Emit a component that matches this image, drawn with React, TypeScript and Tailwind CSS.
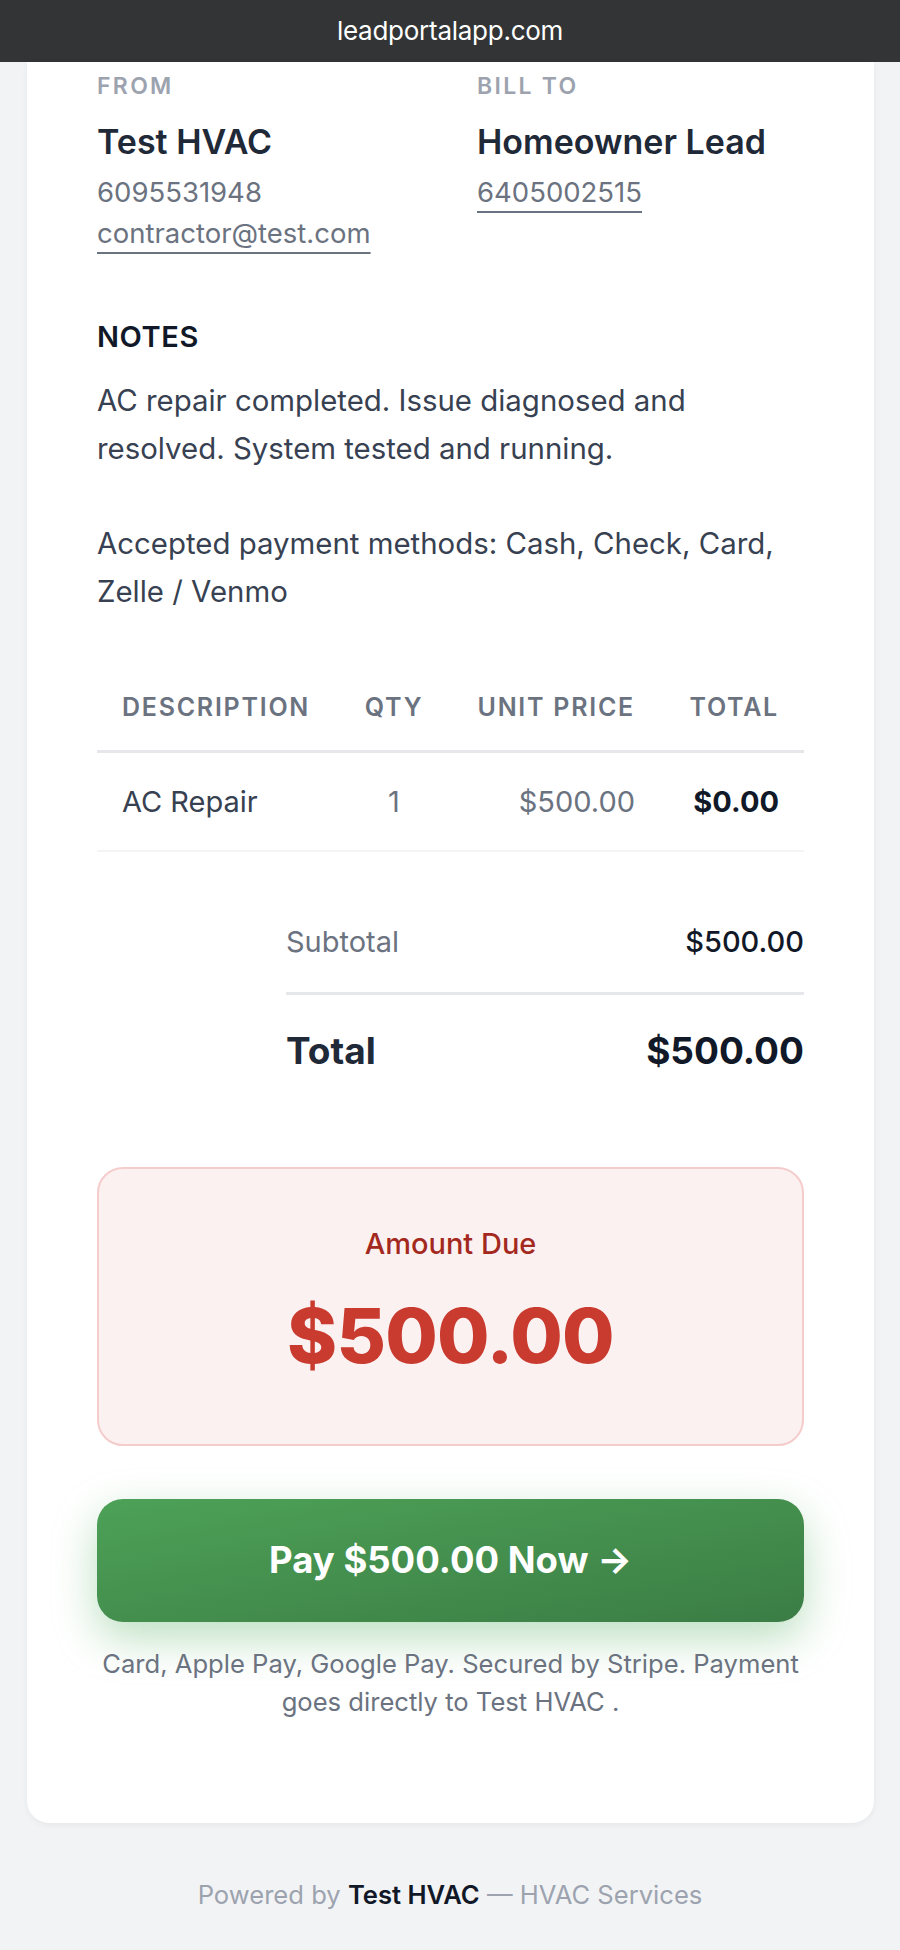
import React from "react";

interface LineItem {
  description: string;
  qty: number;
  unitPrice: string;
  total: string;
}

const items: LineItem[] = [
  { description: "AC Repair", qty: 1, unitPrice: "$500.00", total: "$0.00" },
];

const notes =
  "AC repair completed. Issue diagnosed and resolved. System tested and running.\n\nAccepted payment methods: Cash, Check, Card, Zelle / Venmo";

const App: React.FC = () => {
  return (
    <div className="min-h-[1950px] bg-[#f2f3f5] font-['Inter',sans-serif] antialiased">
      {/* browser address bar */}
      <div className="h-[62px] bg-[#333436] flex items-center justify-center">
        <span className="text-white text-[26px] leading-none tracking-[-0.01em]">leadportalapp.com</span>
      </div>

      <div className="ml-[27px] mr-[26px] bg-white rounded-b-[22px] shadow-[0_2px_6px_rgba(0,0,0,0.05)] px-[70px] pt-[12px] pb-[101px]">
        {/* from / bill to */}
        <div className="grid grid-cols-[380px_1fr]">
          <div>
            <div className="text-[23px] leading-[24px] font-semibold tracking-[0.1em] text-[#9ca3af]">FROM</div>
            <div className="mt-[24px] text-[34px] leading-[40px] font-semibold text-[#1f2937]">Test HVAC</div>
            <div className="mt-[10px] text-[27.5px] leading-[41px] text-[#6b7280]">6095531948</div>
            <div className="text-[27.5px] leading-[41px] text-[#6b7280]">
              <span className="underline decoration-[#6b7280] decoration-2 underline-offset-[9px]">contractor@test.com</span>
            </div>
          </div>
          <div>
            <div className="text-[23px] leading-[24px] font-semibold tracking-[0.1em] text-[#9ca3af]">BILL TO</div>
            <div className="mt-[24px] text-[34px] leading-[40px] font-semibold text-[#1f2937]">Homeowner Lead</div>
            <div className="mt-[10px] text-[27.5px] leading-[41px] text-[#6b7280]">
              <span className="underline decoration-[#6b7280] decoration-2 underline-offset-[9px]">6405002515</span>
            </div>
          </div>
        </div>

        {/* notes */}
        <div className="mt-[65px] text-[29px] leading-[36px] font-semibold tracking-[0.02em] text-[#111827]">NOTES</div>
        <p className="mt-[22px] text-[29.4px] leading-[47.8px] text-[#374151] whitespace-pre-line">{notes}</p>

        {/* line items */}
        <div className="mt-[48px]">
          <div className="grid grid-cols-[243px_108px_212px_1fr] border-b-[3px] border-[#e5e7eb] text-[25px] leading-[30px] font-semibold tracking-[0.07em] text-[#6b7280]">
            <div className="px-[25px] pt-[28px] pb-[28px] whitespace-nowrap">DESCRIPTION</div>
            <div className="pt-[28px] pb-[28px] text-center">QTY</div>
            <div className="px-[25px] pt-[28px] pb-[28px] text-right whitespace-nowrap">UNIT PRICE</div>
            <div className="px-[25px] pt-[28px] pb-[28px] text-right">TOTAL</div>
          </div>
          {items.map((item, i) => (
            <div
              key={i}
              className="grid grid-cols-[243px_108px_212px_1fr] border-b-2 border-[#f3f4f6] text-[29px] leading-[41px]"
            >
              <div className="px-[25px] py-[28px] text-[#374151]">{item.description}</div>
              <div className="py-[28px] text-center text-[#6b7280]">{item.qty}</div>
              <div className="px-[25px] py-[28px] text-right text-[#6b7280]">{item.unitPrice}</div>
              <div className="px-[25px] py-[28px] text-right font-bold text-[#111827]">{item.total}</div>
            </div>
          ))}
        </div>

        {/* totals */}
        <div className="ml-auto w-[518px] mt-[70px]">
          <div className="flex justify-between text-[29px] leading-[40px] pb-[30px] border-b-[3px] border-[#e5e7eb]">
            <span className="text-[#6b7280]">Subtotal</span>
            <span className="text-[#111827] font-medium">$500.00</span>
          </div>
          <div className="flex justify-between text-[37px] leading-[46px] font-bold pt-[33px]">
            <span className="text-[#1f2937]">Total</span>
            <span className="text-[#111827]">$500.00</span>
          </div>
        </div>

        {/* amount due */}
        <div className="mt-[93px] rounded-[26px] border-2 border-[#f5cccc] bg-[#fcf1f1] pt-[55px] pb-[64px] text-center">
          <div className="text-[29px] leading-[40px] font-medium text-[#a3291f]">Amount Due</div>
          <div className="mt-[26px] text-[76px] leading-[90px] font-extrabold tracking-[-0.01em] text-[#c93a2f]">$500.00</div>
        </div>

        {/* pay button */}
        <button className="mt-[53px] w-full h-[123px] rounded-[26px] bg-gradient-to-br from-[#4da157] to-[#3b7d45] shadow-[0_16px_44px_rgba(76,170,90,0.38)] flex items-center justify-center text-white text-[36.5px] font-bold">
          Pay $500.00 Now →
        </button>

        <p className="mt-[23px] text-center text-[25.6px] leading-[38.5px] text-[#6b7280]">
          Card, Apple Pay, Google Pay. Secured by Stripe. Payment goes directly to Test HVAC .
        </p>
      </div>

      <div className="mt-[52px] text-center text-[25.6px] leading-[40px] text-[#9ca3af]">
        Powered by <span className="font-semibold text-[#111827]">Test HVAC</span> — HVAC Services
      </div>
    </div>
  );
};

export default App;
